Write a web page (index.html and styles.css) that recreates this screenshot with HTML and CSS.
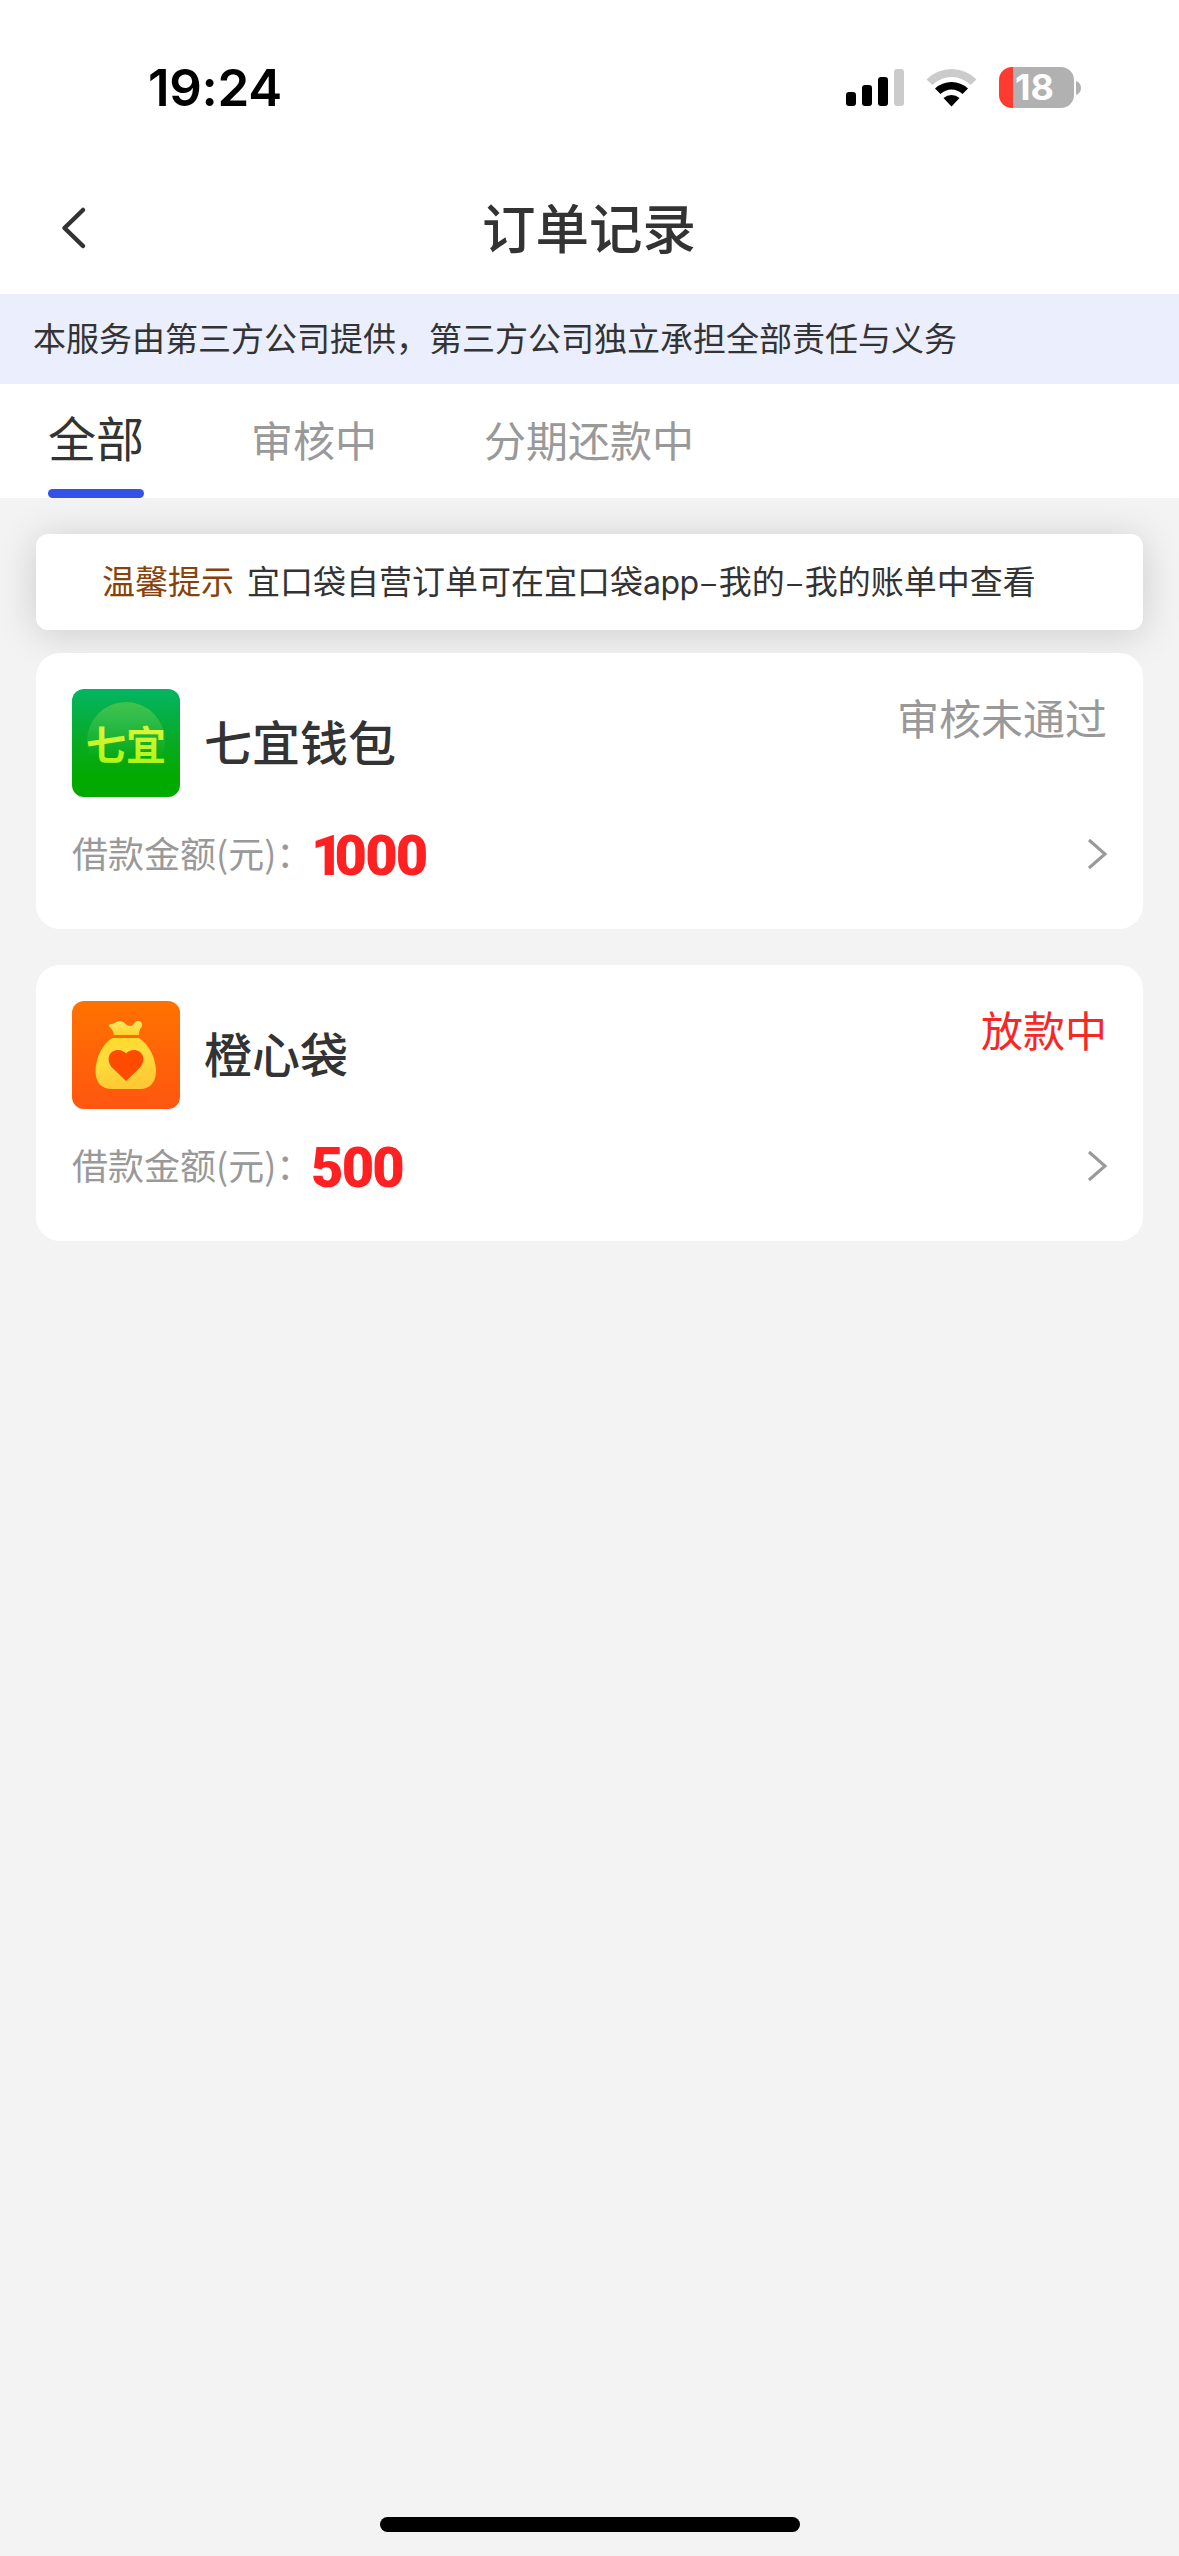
FILE: index.html
```html
<!DOCTYPE html>
<html lang="zh-CN">
<head>
  <meta charset="UTF-8">
  <title>订单记录</title>
  <link rel="stylesheet" href="styles.css">
</head>
<body>
  <div class="status-bar">
    <div class="time">19:24</div>
    <div class="status-icons">
      <svg class="signal" width="58" height="38" viewBox="0 0 58 38">
        <rect x="0" y="23" width="10" height="14" rx="3"/>
        <rect x="16" y="16" width="10" height="21" rx="3"/>
        <rect x="32" y="8" width="10" height="29" rx="3"/>
        <rect x="48" y="0" width="10" height="37" rx="3" fill="#cbcbcb"/>
      </svg>
      <svg class="wifi" width="51" height="38" viewBox="0 0 51 38">
        <path fill="#cbcbcb" d="M0.5 10.5Q11 0 25.5 0T50.5 10.5L44.5 16Q36 8 25.5 8T6.500 16Z"/>
        <path d="M9 19.500Q16 13 25.500 13T42 19.500L36.500 25Q31.500 20.500 25.500 20.500T14.500 25Z"/>
        <path d="M17.500 29Q21 26 25.500 26T33.500 29L25.500 37.500Z"/>
      </svg>
      <div class="battery">
        <div class="battery-body">18</div>
        <svg width="5" height="14" viewBox="0 0 5 14"><path fill="#b1b1b1" d="M0 0Q5 2 5 7T0 14Z"/></svg>
      </div>
    </div>
  </div>

  <div class="nav">
    <svg class="back" width="28" height="44" viewBox="0 0 28 44">
      <path d="M23 4L4.500 22L23 40" fill="none" stroke="#333" stroke-width="4.500" stroke-linecap="round" stroke-linejoin="round"/>
    </svg>
    <div class="title">订单记录</div>
  </div>

  <div class="notice">本服务由第三方公司提供，第三方公司独立承担全部责任与义务</div>

  <div class="tabs">
    <div class="tab active">全部</div>
    <div class="tab">审核中</div>
    <div class="tab">分期还款中</div>
  </div>

  <div class="content">
    <div class="tip"><span class="tip-label">温馨提示</span><span>宜口袋自营订单可在宜口袋<span class="latin">app</span><span class="dash">–</span>我的<span class="dash">–</span>我的账单中查看</span></div>

    <div class="card">
      <div class="card-top">
        <svg class="logo" width="108" height="108" viewBox="0 0 108 108">
          <defs>
            <linearGradient id="green" x1="0" y1="0" x2="0" y2="1">
              <stop offset="0" stop-color="#02b562"/>
              <stop offset="0.500" stop-color="#08aa22"/>
              <stop offset="0.800" stop-color="#02aa00"/>
            </linearGradient>
            <linearGradient id="ball" x1="0" y1="0" x2="0" y2="1">
              <stop offset="0" stop-color="#43c24c"/>
              <stop offset="0.700" stop-color="#43c24c" stop-opacity="0"/>
            </linearGradient>
            <linearGradient id="lime" x1="0" y1="0" x2="0" y2="1">
              <stop offset="0" stop-color="#eef545"/>
              <stop offset="1" stop-color="#a4f70c"/>
            </linearGradient>
          </defs>
          <rect width="108" height="108" fill="url(#green)"/>
          <circle cx="54" cy="52" r="39" fill="url(#ball)"/>
          <text class="logo-text" x="14" y="71" fill="url(#lime)">七宜</text>
        </svg>
        <div class="name">七宜钱包</div>
        <div class="status">审核未通过</div>
      </div>
      <div class="card-bottom">
        <div class="label">借款金额(元)：</div>
        <div class="amount"><span class="one">1</span>000</div>
        <svg class="arrow" width="20" height="32" viewBox="0 0 20 32">
          <path d="M2 2L18 16L2 30" fill="none" stroke="#999" stroke-width="3"/>
        </svg>
      </div>
    </div>

    <div class="card">
      <div class="card-top">
        <svg class="logo" width="108" height="108" viewBox="0 0 108 108">
          <defs>
            <linearGradient id="orange" x1="0" y1="0" x2="0" y2="1">
              <stop offset="0" stop-color="#ff7200"/>
              <stop offset="1" stop-color="#ff5610"/>
            </linearGradient>
            <linearGradient id="gold" x1="0" y1="0" x2="0.300" y2="1">
              <stop offset="0" stop-color="#ffd92a"/>
              <stop offset="0.500" stop-color="#ffdc3c"/>
              <stop offset="1" stop-color="#ffc933"/>
            </linearGradient>
            <linearGradient id="tie" x1="0" y1="0" x2="0" y2="1">
              <stop offset="0" stop-color="#ffe467"/>
              <stop offset="1" stop-color="#ffd52a"/>
            </linearGradient>
          </defs>
          <rect width="108" height="108" fill="url(#orange)"/>
          <path fill="url(#tie)" d="M42 34C41 30 40 28 37.500 26Q36 23.500 39 23C43 23 44 20 48 20C52 20 54 25 58 25C62 25 62 20 66 20C70 20 71.500 24 69 27Q67 29 67 34Z"/>
          <path fill="url(#gold)" d="M40 37H67C77 43 84 58 84 70C84 81 78 88 68 88H40C29 88 23.500 81 23.500 70C23.500 58 30 43 40 37Z"/>
          <path fill="#ff4b00" d="M54 80L40 66.500C33 58 38 49 46 49Q51 49 54 52.500Q57 49 62 49C70 49 75 58 68 66.500Z"/>
        </svg>
        <div class="name">橙心袋</div>
        <div class="status red">放款中</div>
      </div>
      <div class="card-bottom">
        <div class="label">借款金额(元)：</div>
        <div class="amount">500</div>
        <svg class="arrow" width="20" height="32" viewBox="0 0 20 32">
          <path d="M2 2L18 16L2 30" fill="none" stroke="#999" stroke-width="3"/>
        </svg>
      </div>
    </div>
  </div>

  <div class="home-indicator"></div>
</body>
</html>
```
FILE: styles.css
```css
* {
  box-sizing: border-box;
}

body {
  margin: 0;
  height: 2556px;
  display: flex;
  flex-direction: column;
  background-color: #f3f3f3;
  color: #333;
  font-family: "Noto Sans CJK SC", sans-serif;
  white-space: nowrap;
}

svg {
  display: block;
  flex-shrink: 0;
}

.status-bar {
  height: 176px;
  padding: 0 98px 0 148px;
  display: flex;
  justify-content: space-between;
  align-items: center;
  background-color: #fff;
}

.time {
  font-family: Inter, sans-serif;
  font-size: 51px;
  font-weight: 600;
  line-height: 60px;
  letter-spacing: -0.3px;
  color: #000;
}

.status-icons {
  display: flex;
  align-items: center;
}

.wifi {
  margin: 0 22px;
}

.battery {
  display: flex;
  align-items: center;
  gap: 2px;
  margin-bottom: 1px;
}

.battery-body {
  width: 75px;
  height: 41px;
  border-radius: 13px;
  padding-left: 16px;
  background: linear-gradient(to right, #ff3b30 14px, #b1b1b1 14px);
  color: #fff;
  font-family: Inter, sans-serif;
  font-size: 36px;
  font-weight: 700;
  line-height: 41px;
}

.nav {
  height: 118px;
  padding: 0 60px 14px;
  display: flex;
  align-items: center;
  background-color: #fff;
}

.title {
  flex: 1;
  margin-right: 29px;
  padding-bottom: 4px;
  text-align: center;
  font-size: 53.5px;
  font-weight: 500;
  line-height: 80px;
}

.notice {
  height: 90px;
  padding-left: 33px;
  background-color: #eaeefd;
  font-size: 33px;
  line-height: 87px;
}

.tabs {
  height: 114px;
  padding-left: 48px;
  display: flex;
  gap: 107px;
  background-color: #fff;
}

.tab {
  height: 114px;
  font-size: 42px;
  line-height: 110px;
  color: #999;
}

.active {
  display: flex;
  flex-direction: column;
  justify-content: space-between;
  font-size: 48px;
  line-height: 105px;
  color: #333;
}

.active::after {
  content: "";
  height: 9px;
  border-radius: 5px;
  background-color: #3452e8;
}

.content {
  flex: 1;
  padding: 36px 36px 0;
  overflow: hidden;
}

.tip {
  height: 96px;
  margin-bottom: 23px;
  padding-left: 66px;
  border-radius: 12px;
  background-color: #fff;
  box-shadow: 0 4px 40px rgba(0, 0, 0, 0.16);
  font-size: 33px;
  line-height: 93px;
}

.tip-label {
  margin-right: 13px;
  color: #884209;
}

.latin {
  font-family: Inter, sans-serif;
  font-size: 32px;
  letter-spacing: -0.5px;
}

.dash {
  display: inline-block;
  width: 20px;
  text-align: center;
}

.card {
  height: 276px;
  margin-bottom: 36px;
  padding: 36px;
  border-radius: 24px;
  background-color: #fff;
  position: relative;
}

.card-top {
  display: flex;
}

.logo {
  border-radius: 12px;
}

.logo-text {
  font-size: 40px;
  font-weight: 700;
}

.name {
  flex: 1;
  margin-left: 24px;
  font-size: 48px;
  font-weight: 500;
  line-height: 102px;
}

.status {
  font-size: 42px;
  line-height: 56px;
  color: #999;
}

.red {
  color: #f92626;
}

.card-bottom {
  height: 60px;
  margin-top: 27px;
  display: flex;
  align-items: center;
}

.label {
  width: 239px;
  padding-bottom: 4px;
  font-size: 36px;
  line-height: 60px;
  color: #999;
}

.amount {
  flex: 1;
  padding-top: 3px;
  font-family: Roboto, sans-serif;
  font-size: 56px;
  font-weight: 900;
  line-height: 60px;
  letter-spacing: -1.8px;
  color: #ff2022;
}

.one {
  letter-spacing: -9px;
}

.home-indicator {
  width: 420px;
  height: 15px;
  margin: 0 0 24px 380px;
  border-radius: 8px;
  background-color: #000;
}
```
